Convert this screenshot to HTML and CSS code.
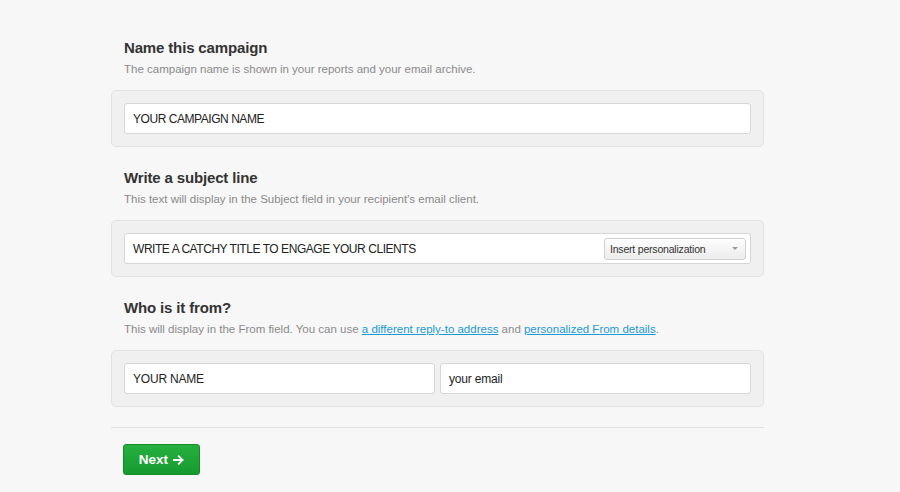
FILE: index.html
```html
<!DOCTYPE html>
<html>
<head>
<meta charset="utf-8">
<link rel="stylesheet" href="styles.css">
</head>
<body>
<div class="page">
  <section class="section">
    <div class="head">
      <h2>Name this campaign</h2>
      <p>The campaign name is shown in your reports and your email archive.</p>
    </div>
    <div class="panel">
      <div class="field">YOUR CAMPAIGN NAME</div>
    </div>
  </section>

  <section class="section">
    <div class="head">
      <h2>Write a subject line</h2>
      <p>This text will display in the Subject field in your recipient's email client.</p>
    </div>
    <div class="panel">
      <div class="field">
        <span class="value">WRITE A CATCHY TITLE TO ENGAGE YOUR CLIENTS</span>
        <div class="select">Insert personalization<span class="caret"></span></div>
      </div>
    </div>
  </section>

  <section class="section last">
    <div class="head">
      <h2>Who is it from?</h2>
      <p>This will display in the From field. You can use <a href="#">a different reply-to address</a> and <a href="#">personalized From details</a>.</p>
    </div>
    <div class="panel">
      <div class="row">
        <div class="field">YOUR NAME</div>
        <div class="field">your email</div>
      </div>
    </div>
  </section>

  <hr class="divider">
  <div class="actions">
    <button class="btn">Next<svg class="arrow" width="11" height="10" viewBox="0 0 11 10"><path d="M1 5H9.5M5.8 1.3L9.5 5L5.8 8.7" fill="none" stroke="#fff" stroke-width="1.8" stroke-linecap="square"/></svg></button>
  </div>
</div>
</body>
</html>
```
FILE: styles.css
```css
html, body {
  margin: 0;
  padding: 0;
  background: #f7f7f7;
  font-family: "Liberation Sans", Arial, sans-serif;
  color: #333;
}
.page {
  width: 653px;
  margin-left: 111px;
  padding-top: 39px;
}
.section {
  margin-bottom: 22px;
}
.section.last {
  margin-bottom: 20px;
}
.head {
  padding: 0 13px;
}
.head h2 {
  margin: 0;
  font-size: 15px;
  line-height: 18px;
  font-weight: bold;
  letter-spacing: -0.15px;
  color: #333;
}
.head p {
  margin: 4px 0 13px;
  font-size: 11.5px;
  line-height: 16px;
  color: #8a8a8a;
}
.head a {
  color: #1c9ad6;
  text-decoration: underline;
}
.panel {
  background: #f0f0f0;
  border: 1px solid #e2e2e2;
  border-radius: 5px;
  padding: 12px;
}
.field {
  box-sizing: border-box;
  height: 31px;
  background: #fff;
  border: 1px solid #d6d6d6;
  border-radius: 3px;
  padding: 0 4px 0 8px;
  display: flex;
  align-items: center;
  font-size: 12px;
  letter-spacing: -0.45px;
  color: #222;
}
.field .value {
  flex: 1;
}
.row {
  display: flex;
  gap: 5px;
}
.row .field {
  flex: 1;
  letter-spacing: -0.2px;
}
.select {
  box-sizing: border-box;
  width: 142px;
  height: 22px;
  border: 1px solid #cfcfcf;
  border-radius: 3px;
  background: linear-gradient(#fdfdfd, #ececec);
  font-size: 10.5px;
  letter-spacing: -0.2px;
  color: #333;
  display: flex;
  align-items: center;
  justify-content: space-between;
  padding: 0 7px 0 5px;
}
.caret {
  width: 0;
  height: 0;
  border-left: 3px solid transparent;
  border-right: 3px solid transparent;
  border-top: 3px solid #999;
}
.divider {
  border: 0;
  border-top: 1px solid #e2e2e2;
  margin: 0;
}
.actions {
  padding: 16px 12px 0;
}
.btn {
  box-sizing: border-box;
  width: 77px;
  height: 31px;
  border: 1px solid #178a2c;
  border-radius: 3px;
  background: linear-gradient(#26b040, #169a2f);
  color: #fff;
  font-family: "Liberation Sans", Arial, sans-serif;
  font-size: 13.5px;
  font-weight: bold;
  box-shadow: 0 1px 1px rgba(0,0,0,0.15);
  padding: 0;
  display: flex;
  align-items: center;
  justify-content: center;
  gap: 5px;
}
```
